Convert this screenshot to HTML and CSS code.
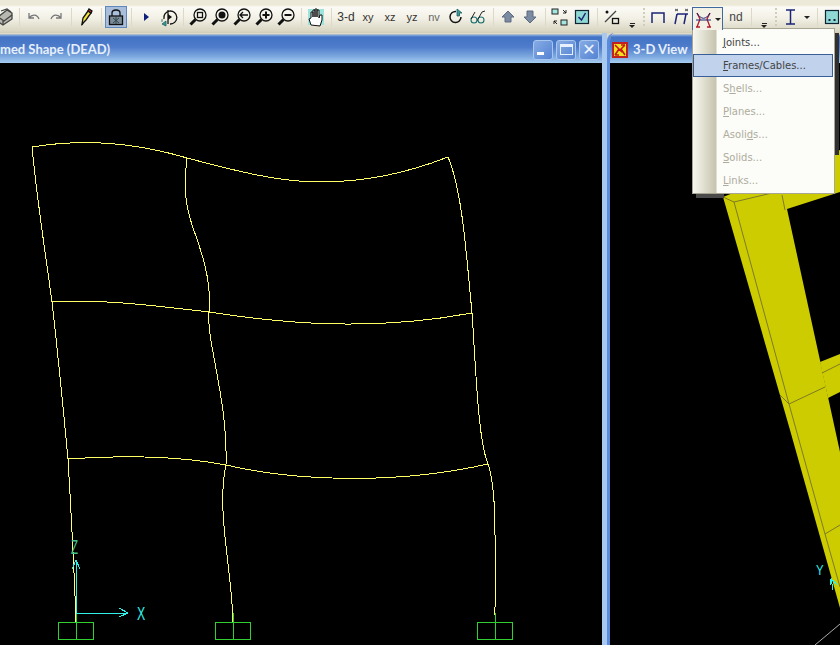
FILE: index.html
```html
<!DOCTYPE html>
<html lang="en">
<head>
<meta charset="utf-8">
<title>SAP2000</title>
<link rel="stylesheet" href="styles.css">
</head>
<body>
<div class="app">
  <div class="toolbar">
    <span class="tool tool-first"><svg class="ico" viewBox="0 0 20 20"><path class="g-fill" d="M4 10l9-7 5 3v6l-9 6-6-4z"/><path class="g-line" d="M4 10l6 4 8-6M9 18v-4M7 4l6-2 4 3"/></svg></span>
    <span class="sep"></span>
    <span class="tool"><svg class="ico" viewBox="0 0 20 20"><path class="dim" d="M5 6v5h5M5 11c3-4 8-4 10 1"/></svg></span>
    <span class="tool"><svg class="ico" viewBox="0 0 20 20"><path class="dim" d="M15 6v5h-5M15 11c-3-4-8-4-10 1"/></svg></span>
    <span class="sep"></span>
    <span class="tool"><svg class="ico" viewBox="0 0 20 20"><path class="pencil" d="M6 17l1-6 5-7 3 2-5 7z"/><path class="pencil-tip" d="M12 4l1-2 3 2-1 2z"/><path class="k" d="M6 18l1-2"/></svg></span>
    <span class="sep"></span>
    <span class="tool tool-on"><svg class="ico" viewBox="0 0 20 20"><path class="k" d="M6 9V6c0-4 8-4 8 0v3"/><rect class="lock" x="3.500" y="9" width="13" height="8.500"/><path class="lock-mark" d="M7 11l6 5M13 11l-6 5M10 10v7"/></svg></span>
    <span class="sep"></span>
    <span class="tool"><svg class="ico" viewBox="0 0 20 20"><path class="navy-fill" d="M8 6l5 4-5 4z"/></svg></span>
    <span class="tool"><svg class="ico" viewBox="0 0 20 20"><path class="k" d="M6 12a6.500 6.500 0 1 1 6 5M10 3v14"/><path class="k-fill" d="M10 7l4 3-4 3z"/><path class="teal" d="M8 14l-4 3 4 2zM4 12v3"/></svg></span>
    <span class="sep"></span>
    <span class="tool"><svg class="ico" viewBox="0 0 20 20"><circle class="k" cx="12" cy="8" r="6"/><rect class="k" x="9.500" y="5.500" width="5" height="5"/><path class="k-thick" d="M7.500 12.500L2.500 17.500"/></svg></span>
    <span class="tool"><svg class="ico" viewBox="0 0 20 20"><circle class="k" cx="12" cy="8" r="6"/><circle class="k-fill" cx="12" cy="8" r="3.500"/><path class="k-thick" d="M7.500 12.500L2.500 17.500"/></svg></span>
    <span class="tool"><svg class="ico" viewBox="0 0 20 20"><circle class="k" cx="12" cy="8" r="6"/><path class="k" d="M8 8h8M11 5L8 8l3 3"/><path class="k-thick" d="M7.500 12.500L2.500 17.500"/></svg></span>
    <span class="tool"><svg class="ico" viewBox="0 0 20 20"><circle class="k" cx="12" cy="8" r="6"/><path class="k-med" d="M8.500 8h7M12 4.500v7"/><path class="k-thick" d="M7.500 12.500L2.500 17.500"/></svg></span>
    <span class="tool"><svg class="ico" viewBox="0 0 20 20"><circle class="k" cx="12" cy="8" r="6"/><path class="k-med" d="M8.500 8h7"/><path class="k-thick" d="M7.500 12.500L2.500 17.500"/></svg></span>
    <span class="sep"></span>
    <span class="tool"><svg class="ico" viewBox="0 0 20 20"><rect class="hand-bg" x="2" y="2" width="16" height="16"/><path class="hand" d="M5 18l-2-6 2-1V5h2v5-7h2v7-8h2v8-7h2v8l1-3h2v5l-2 6z"/></svg></span>
    <span class="sep"></span>
    <span class="tool txt">3-d</span>
    <span class="tool txt txt-sm">xy</span>
    <span class="tool txt txt-sm">xz</span>
    <span class="tool txt txt-sm">yz</span>
    <span class="tool txt txt-sm txt-dim">nv</span>
    <span class="tool"><svg class="ico" viewBox="0 0 20 20"><path class="k-thin" d="M15 10a5.500 5.500 0 1 1-5-5.500"/><path class="teal" d="M11 2l5 4h-2.500v3H11z"/></svg></span>
    <span class="tool"><svg class="ico" viewBox="0 0 20 20"><circle class="teal-line" cx="6" cy="13" r="3"/><circle class="teal-line" cx="13" cy="13" r="3"/><path class="k-hair" d="M3 12l4-7M9 13h1M10 12l4-7 3-1"/></svg></span>
    <span class="sep"></span>
    <span class="tool"><svg class="ico" viewBox="0 0 20 20"><path class="arrow" d="M10 4l6 6h-3v5H7v-5H4z"/></svg></span>
    <span class="tool"><svg class="ico" viewBox="0 0 20 20"><path class="arrow" d="M7 4h6v6h3l-6 6-6-6h3z"/></svg></span>
    <span class="sep"></span>
    <span class="tool"><svg class="ico" viewBox="0 0 20 20"><rect class="tealbox" x="2" y="2" width="6" height="5"/><rect class="tealbox" x="11" y="13" width="6" height="5"/><path class="k-hair" d="M13 3l3 3M16 3v3h-3M7 17l-3-3M4 17v-3h3"/></svg></span>
    <span class="tool"><svg class="ico" viewBox="0 0 20 20"><rect class="checkbox" x="3.500" y="3.500" width="13" height="13"/><path class="navy-check" d="M6.500 10l3 3 4-7"/></svg></span>
    <span class="sep"></span>
    <span class="tool"><svg class="ico" viewBox="0 0 20 20"><path class="g-line" d="M3 15L14 4"/><circle class="k-fill" cx="5" cy="5" r="1.500"/><rect class="k" x="10.500" y="11.500" width="6" height="5"/></svg></span>
    <span class="chev"><i class="chev-bar"></i><i class="chev-arrow"></i></span>
    <span class="grip"></span>
    <span class="tool"><svg class="ico" viewBox="0 0 20 20"><path class="navy-line" d="M4 16V6h12v10"/></svg></span>
    <span class="tool"><svg class="ico" viewBox="0 0 20 20"><path class="navy-line" d="M7 7L5 17M7 7h11M16 7l-2 10"/><path class="tick" d="M5 2l3 2M8 2L5 4M15 2l3 2M18 2l-3 2"/></svg></span>
    <span class="split"><svg class="ico" viewBox="0 0 20 20"><path class="red-line" d="M3 4l3 6-3 8M16 4l-3 6 3 8M2 18h4M13 18h4"/><path class="navy-thin" d="M3 4c4 7 9 7 13 0M2 11h15"/></svg><i class="split-arrow"></i></span>
    <span class="tool txt txt-sm txt-nd">nd</span>
    <span class="sep"></span>
    <span class="chev"><i class="chev-bar"></i><i class="chev-arrow"></i></span>
    <span class="grip"></span>
    <span class="tool"><svg class="ico" viewBox="0 0 20 20"><path class="navy-line" d="M6 3h9M6 17h9M10.500 3v14"/></svg></span>
    <span class="drop"><i class="split-arrow"></i></span>
    <span class="sep"></span>
    <span class="tool"><svg class="ico" viewBox="0 0 20 20"><rect class="checkbox" x="3.500" y="3.500" width="13" height="13"/><path class="dots" d="M6.500 13h2M11.500 13h2"/></svg></span>
  </div>

  <div class="desktop">
    <section class="win win-left">
      <header class="title">
        <span class="title-text">med Shape (DEAD)</span>
        <span class="win-btns">
          <span class="wbtn"><i class="w-min"></i></span>
          <span class="wbtn"><i class="w-max"></i></span>
          <span class="wbtn w-close">✕</span>
        </span>
      </header>
      <svg class="canvas" viewBox="0 63 602 582" preserveAspectRatio="xMinYMin slice">
        <g class="frame">
          <path d="M32 147C80 139 130 141 187 158C240 172 280 182 320 182C370 182 410 172 448 157"/>
          <path d="M32 147C37 200 45 250 52 302C58 355 63 405 68 459C71 510 74 565 76 622"/>
          <path d="M187 158C183 190 186 205 192 225C201 250 212 280 209 312C206 340 228 400 226 465C216 510 232 570 233 622"/>
          <path d="M448 157C462 190 466 250 472 313C476 370 478 440 488 464C497 490 495 540 495 622"/>
          <path d="M52 302C100 299 150 305 209 312C280 323 370 332 472 313"/>
          <path d="M68 459C120 455 180 456 226 465C290 480 390 486 488 464"/>
        </g>
        <g class="support">
          <path d="M58.500 622.500h35v17h-35zM76 613v27"/>
          <path d="M215.500 622.500h35v17h-35zM233 613v27"/>
          <path d="M477.500 622.500h35v17h-35zM495 613v27"/>
        </g>
        <g class="axis">
          <path d="M76 561v52h52M72 569l4-9 4 9M119 608l9 5-9 4"/>
        </g>
        <text class="ax-label" transform="translate(137 620) scale(.65 1)">X</text>
        <text class="ax-label ax-z" transform="translate(71 554) scale(.55 1)">Z</text>
      </svg>
    </section>
    <section class="win win-right">
      <header class="title title-right">
        <svg class="view-ico" viewBox="0 0 16 16"><rect class="vi-bg" x="1" y="1" width="14" height="14"/><path class="vi-mark" d="M3 3l4 4-4 6M13 3L9 7l4 6M3 13h4M9 3h4M7 7l3 3"/></svg>
        <span class="title-text">3-D View</span>
      </header>
      <svg class="canvas" viewBox="610 63 230 582" preserveAspectRatio="xMinYMin slice">
        <g class="solid">
          <polygon points="723,197 770,178 840,150 840,192 787,209 840,452 840,608 790,430"/>
          <polygon points="820,362 840,354 840,392 828,398"/>
        </g>
        <g class="edge">
          <path d="M723,197L734,202L789,404L825,534L840,587"/>
          <path d="M734,202L772,193M782,195L785,210M789,404L825,387M789,404L780,395M825,534L840,525M822,373L840,364"/>
        </g>
        <path class="ground" d="M815,645L840,624"/>
        <g class="axis">
          <path d="M831,578l2,12M831,579l7,6M831,579l-1,6"/>
        </g>
        <text class="ax-label" transform="translate(816 575) scale(.6 .75)">Y</text>
      </svg>
    </section>
  </div>

  <div class="menu">
    <div class="menu-item"><span><u>J</u>oints...</span></div>
    <div class="menu-item menu-item-on"><span><u>F</u>rames/Cables...</span></div>
    <div class="menu-item off"><span>S<u>h</u>ells...</span></div>
    <div class="menu-item off"><span><u>P</u>lanes...</span></div>
    <div class="menu-item off"><span>Asoli<u>d</u>s...</span></div>
    <div class="menu-item off"><span><u>S</u>olids...</span></div>
    <div class="menu-item off"><span><u>L</u>inks...</span></div>
  </div>
</div>
</body>
</html>
```
FILE: styles.css
```css
* { box-sizing: border-box; }
html, body { margin: 0; padding: 0; background: #000; }

.app {
  position: relative;
  width: 840px;
  height: 645px;
  overflow: hidden;
  display: flex;
  flex-direction: column;
  font-family: "DejaVu Sans", "Liberation Sans", sans-serif;
}

/* toolbar */
.toolbar {
  height: 33px;
  flex: none;
  display: flex;
  align-items: flex-start;
  padding-top: 6px;
  background: linear-gradient(#ece9d8 0, #ece9d8 5px, #fbfaf5 7px, #f3f1e6 18px, #d9d6c3 31px, #cfccb8 33px);
}
.tool {
  flex: none;
  width: 22px;
  height: 22px;
  display: flex;
  align-items: center;
  justify-content: center;
}
.tool-first { margin-left: -7px; }
.tool-on { background: #a9bedb; outline: 1px solid #5f86bd; outline-offset: -1px; }
.ico { width: 20px; height: 20px; flex: none; }
.sep {
  flex: none;
  width: 8px;
  height: 18px;
  margin-top: 2px;
  background: linear-gradient(#dcd9c8, #dcd9c8) center / 1px 100% no-repeat;
}
.txt { font: 12px "Liberation Sans", sans-serif; color: #333; }
.txt-sm { font-size: 11px; }
.txt-dim { color: #666; }
.txt-nd { color: #444; font-size: 12px; }
.chev {
  flex: none;
  width: 18px;
  height: 22px;
  display: flex;
  flex-direction: column;
  align-items: center;
  justify-content: flex-end;
  gap: 1px;
}
.chev-bar { width: 5px; height: 1px; background: #222; }
.chev-arrow { width: 0; height: 0; border: 3px solid transparent; border-top: 3px solid #222; border-bottom: 0; }
.grip {
  flex: none;
  width: 6px;
  height: 18px;
  margin-top: 2px;
  background: repeating-linear-gradient(#d0cdb9 0 2px, transparent 2px 4px) center / 2px 100% no-repeat;
}
.split {
  flex: none;
  width: 31px;
  height: 23px;
  margin-top: 1px;
  margin-left: 1px;
  padding-left: 1px;
  display: flex;
  align-items: center;
  gap: 1px;
  background: #f3f1e6;
  border: 1px solid #3f6a9f;
  border-bottom: 0;
  position: relative;
  z-index: 3;
}
.split + .tool { margin-left: 2px; }
.split-arrow { width: 0; height: 0; border: 3px solid transparent; border-top: 3px solid #222; border-bottom: 0; }
.drop { flex: none; width: 12px; height: 22px; display: flex; align-items: center; justify-content: center; }

/* icon strokes */
.ico path, .ico rect, .ico circle { fill: none; stroke-width: 1.300; }
.ico .k, .ico .k-med, .ico .k-thick, .ico .k-thin, .ico .k-hair { stroke: #111; }
.ico .k-med { stroke-width: 2; }
.ico .k-thick { stroke-width: 3; }
.ico .k-thin { stroke-width: 1.500; }
.ico .k-hair { stroke-width: .9; }
.ico .k-fill { fill: #111; stroke: none; }
.ico .dim { stroke: #77777a; }
.ico .g-fill { fill: #b8b8b0; stroke: #444; }
.ico .g-line { stroke: #444; }
.ico .pencil { fill: #f2e23a; stroke: #111; }
.ico .pencil-tip { fill: #d22; stroke: #111; }
.ico .lock { fill: #7e8c9a; stroke: #111; }
.ico .lock-mark { stroke: #2c4a50; stroke-width: 1; }
.ico .navy-fill { fill: #10207a; stroke: none; }
.ico .navy-line { stroke: #1b2475; stroke-width: 1.500; }
.ico .navy-thin { stroke: #1b2475; stroke-width: 1; }
.ico .navy-check { stroke: #1b2475; stroke-width: 1.500; }
.ico .tick { stroke: #333; stroke-width: .8; }
.ico .red-line { stroke: #b31b2c; stroke-width: 1.300; }
.ico .teal { fill: #3a9a9a; stroke: #1d6060; stroke-width: .8; }
.ico .teal-line { stroke: #1d7070; stroke-width: 1.100; }
.ico .hand-bg { fill: #9de4dc; stroke: none; }
.ico .hand { fill: #fff; stroke: #111; stroke-width: 1; }
.ico .arrow { fill: #7a8ba2; stroke: #5c6b80; stroke-width: 1; }
.ico .tealbox { fill: #a3e6e0; stroke: #222; stroke-width: 1; }
.ico .checkbox { fill: #8fd8d4; stroke: #123; stroke-width: 1.200; }
.ico .dots { stroke: #123; stroke-width: 2; }

/* windows */
.desktop { flex: 1; display: flex; min-height: 0; background: #d9d6c3; }
.win { display: flex; flex-direction: column; min-height: 0; }
.win-left {
  width: 607px;
  flex: none;
  border-right: 5px solid #6a9ae0;
  border-image: linear-gradient(90deg, #6a9ae0 40%, #a8c8f0 40%) 1;
}
.win-right {
  flex: 1;
  min-width: 0;
  border-left: 3px solid #5a8bdc;
  border-top-left-radius: 8px;
  overflow: hidden;
}
.title {
  height: 30px;
  flex: none;
  padding-top: 3px;
  display: flex;
  align-items: center;
  color: #e6f0fb;
  background: linear-gradient(#ece9d8 0, #cfccb8 1px, #86aae0 2px, #4273c4 4px, #4f7ccb 14px, #7aa6de 23px, #a6ccf0 30px);
}
.title-right { padding-left: 2px; gap: 5px; }
.title-text { font: bold 13px Lato, "Liberation Sans", sans-serif; line-height: 1; }
.win-btns { margin-left: auto; display: flex; gap: 3px; padding-right: 3px; }
.wbtn {
  width: 20px;
  height: 20px;
  border: 1px solid #a8c6ee;
  border-radius: 3px;
  background: linear-gradient(135deg, #86ace4, #5583d2);
  display: flex;
  align-items: center;
  justify-content: center;
  color: #eef5ff;
  font-size: 16px;
  font-weight: bold;
  line-height: 1;
}
.w-min { width: 7px; height: 3px; background: #fff; margin: 8px 5px 0 0; }
.w-max { width: 13px; height: 11px; border: 1px solid #e6f0ff; border-top-width: 3px; }
.view-ico { width: 16px; height: 16px; flex: none; }
.vi-bg { fill: #f0e020; stroke: #c02020; stroke-width: 2; }
.vi-mark { fill: none; stroke: #c81818; stroke-width: 1.600; }

.canvas { flex: 1; min-height: 0; width: 100%; display: block; background: #000; }
.frame path { fill: none; stroke: #ffff66; stroke-width: 1; shape-rendering: crispEdges; }
.support path { fill: none; stroke: #30d030; stroke-width: 1; shape-rendering: crispEdges; }
.axis path { fill: none; stroke: #30f0e8; stroke-width: 1; shape-rendering: crispEdges; }
.ax-label { font: 19px "Liberation Sans", sans-serif; fill: #30f0e8; }
.ax-z { font-size: 21px; fill: #40c090; }
.solid polygon { fill: #cccc00; }
.edge path { fill: none; stroke: #7e7a28; stroke-width: 1; }
.ground { fill: none; stroke: #aaa; stroke-width: 1; }

/* drop-down menu */
.menu {
  position: absolute;
  left: 692px;
  top: 28px;
  width: 143px;
  height: 166px;
  padding: 2px 1px 0 0;
  border: 1px solid #a8a692;
  background: linear-gradient(90deg, #f7f7f0 0, #c6c4ae 23px, #fcfcf9 24px);
  font-size: 10px;
  color: #444;
}
.menu::before {
  content: "";
  position: absolute;
  left: 142px;
  top: 4px;
  width: 4px;
  height: 122px;
  background: #303030;
}
.menu::after {
  content: "";
  position: absolute;
  left: 3px;
  top: 165px;
  width: 28px;
  height: 4px;
  background: #4a4a4a;
}
.menu-item {
  height: 23px;
  padding-left: 30px;
  display: flex;
  align-items: center;
}
.menu-item-on {
  background: #c0d2ec;
  border: 1px solid #3a5f96;
  padding-left: 29px;
}
.off { color: #aeac9c; }
```
